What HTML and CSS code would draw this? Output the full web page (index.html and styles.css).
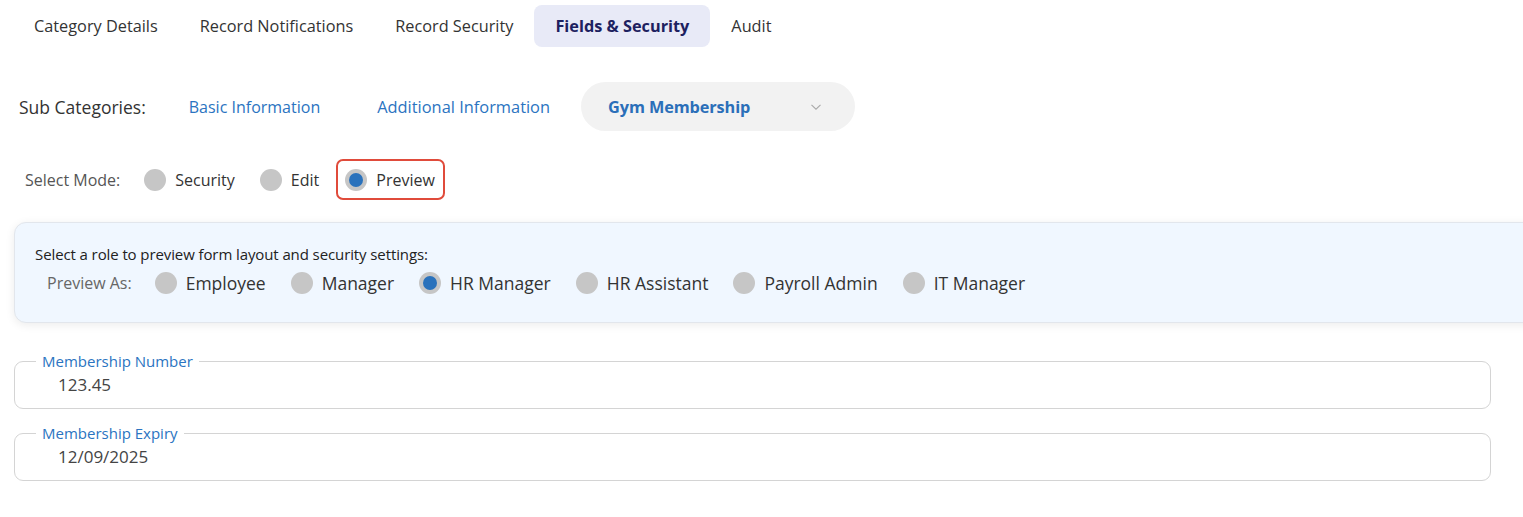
FILE: index.html
```html
<!DOCTYPE html>
<html>
<head>
<meta charset="utf-8">
<link rel="stylesheet" href="styles.css">
</head>
<body>
<div class="page">
  <nav class="tabs">
    <div class="tab">Category Details</div>
    <div class="tab">Record Notifications</div>
    <div class="tab">Record Security</div>
    <div class="tab active">Fields &amp; Security</div>
    <div class="tab">Audit</div>
  </nav>

  <div class="subcats">
    <span class="subcats-label">Sub Categories:</span>
    <a class="subcat">Basic Information</a>
    <a class="subcat">Additional Information</a>
    <div class="subcat-pill">
      <span class="pill-text">Gym Membership</span>
      <svg class="chev" width="12" height="8" viewBox="0 0 12 8"><path d="M1.5 1.8 L6 6.2 L10.5 1.8" fill="none" stroke="#a9a9a9" stroke-width="1.1"/></svg>
    </div>
  </div>

  <div class="modes">
    <span class="modes-label">Select Mode:</span>
    <label class="mode"><span class="radio"></span>Security</label>
    <label class="mode"><span class="radio"></span>Edit</label>
    <label class="mode mode-hl"><span class="radio on"></span>Preview</label>
  </div>

  <div class="panel">
    <div class="panel-title">Select a role to preview form layout and security settings:</div>
    <div class="roles">
      <span class="roles-label">Preview As:</span>
      <label class="role"><span class="radio"></span>Employee</label>
      <label class="role"><span class="radio"></span>Manager</label>
      <label class="role"><span class="radio on"></span>HR Manager</label>
      <label class="role"><span class="radio"></span>HR Assistant</label>
      <label class="role"><span class="radio"></span>Payroll Admin</label>
      <label class="role"><span class="radio"></span>IT Manager</label>
    </div>
  </div>

  <fieldset class="field first">
    <legend>Membership Number</legend>
    <div class="value">123.45</div>
  </fieldset>
  <fieldset class="field">
    <legend>Membership Expiry</legend>
    <div class="value">12/09/2025</div>
  </fieldset>
</div>
</body>
</html>
```

FILE: styles.css
```css
* { box-sizing: border-box; }
html, body { margin: 0; padding: 0; background: #fff; }
body {
  font-family: "Open Sans", "Noto Sans", sans-serif;
  color: #333;
  overflow: hidden;
  width: 1523px;
  height: 517px;
}
.page { padding: 5px 0 0 14px; }

.tabs { display: flex; align-items: center; height: 42px; margin-left: -1px; }
.tab {
  padding: 0 21px;
  height: 42px;
  line-height: 42px;
  font-size: 16.3px;
  color: #333;
  border-radius: 8px;
}
.tab.active {
  background: #e8eaf7;
  color: #1d2160;
  font-weight: 700;
}

.subcats {
  display: flex;
  align-items: center;
  margin-top: 35px;
  height: 49px;
  padding-left: 5px;
}
.subcats-label { font-size: 17.5px; color: #333; margin-right: 43px; }
.subcat { font-size: 16px; color: #2b74c1; margin-right: 57px; }
.subcat + .subcat { font-size: 16.4px; margin-right: 31px; }
.subcat-pill {
  display: flex;
  align-items: center;
  justify-content: space-between;
  width: 274px;
  height: 49px;
  background: #f2f2f2;
  border-radius: 25px;
  padding: 0 33px 0 27px;
}
.pill-text { font-size: 16.3px; font-weight: 700; color: #2b6fb9; letter-spacing: -0.1px; }

.modes {
  display: flex;
  align-items: center;
  margin-top: 28px;
  height: 41px;
  padding-left: 11px;
}
.modes-label { font-size: 16px; color: #555; margin-right: 24px; }
.mode {
  display: flex;
  align-items: center;
  font-size: 16px;
  color: #333;
  margin-right: 25px;
}
.mode .radio { margin-right: 9px; }
.mode-hl {
  border: 2px solid #e04b3b;
  border-radius: 7px;
  height: 41px;
  padding: 0 8px 0 7px;
  margin-left: -8px;
}

.radio {
  display: inline-block;
  width: 22px;
  height: 22px;
  border-radius: 50%;
  background: #c6c6c6;
  position: relative;
  flex: none;
}
.radio.on::after {
  content: "";
  position: absolute;
  left: 4px; top: 4px;
  width: 14px; height: 14px;
  border-radius: 50%;
  background: #2a72bc;
}

.panel {
  margin-top: 22px;
  margin-right: -20px;
  height: 101px;
  background: #f0f7ff;
  border: 1px solid #e2e6ec;
  border-radius: 12px;
  box-shadow: 0 2px 10px rgba(0,0,0,0.08);
  padding: 21px 0 0 20px;
}
.panel-title { font-size: 15px; color: #222; letter-spacing: -0.1px; }
.roles { display: flex; align-items: center; margin-top: 7px; padding-left: 12px; }
.roles-label { font-size: 16px; color: #666; margin-right: 23px; }
.role {
  display: flex;
  align-items: center;
  font-size: 17.5px;
  color: #333;
  margin-right: 25px;
}
.role .radio { margin-right: 9px; }

.field {
  margin: 0;
  width: 1477px;
  border: 1px solid #d4d4d4;
  border-radius: 9px;
  padding: 0 0 0 21px;
  height: 58px;
}
.field.first { margin-top: 28px; }
.field + .field { margin-top: 14px; }
.field legend {
  font-size: 15px;
  color: #2b74c1;
  padding: 0 6px;
}
.value { font-size: 17px; color: #444; margin: 2px 0 0 22px; }
```
